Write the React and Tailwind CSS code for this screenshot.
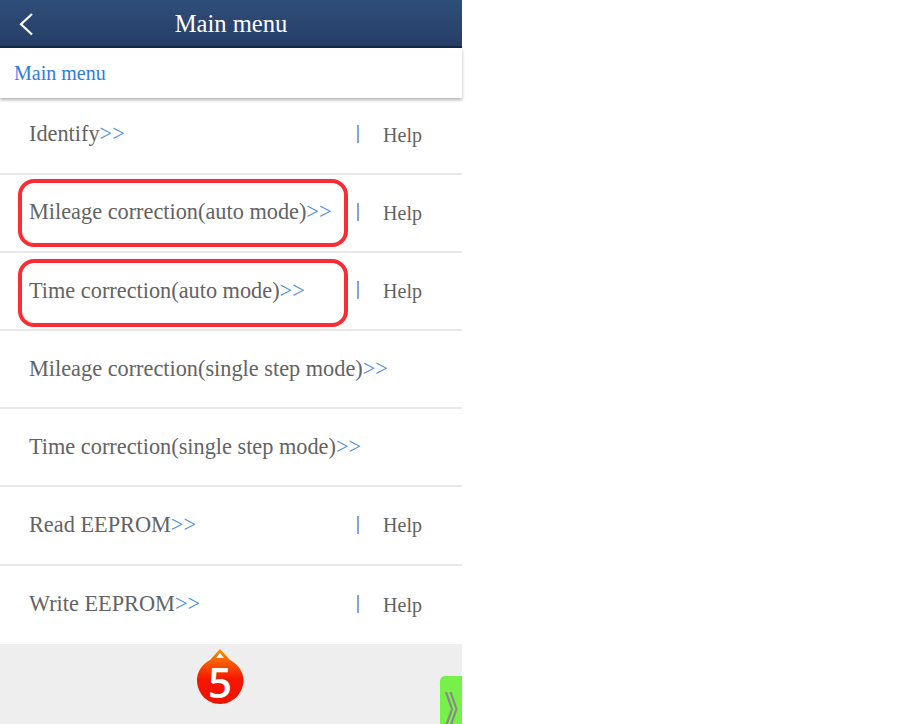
const rows = [
  { label: "Identify", help: true },
  { label: "Mileage correction(auto mode)", help: true, box: "top-[4.7px]" },
  { label: "Time correction(auto mode)", help: true, box: "top-[6.7px]" },
  { label: "Mileage correction(single step mode)" },
  { label: "Time correction(single step mode)" },
  { label: "Read EEPROM", help: true },
  { label: "Write EEPROM", help: true },
];

function MenuRow({ label, help, box }) {
  return (
    <div className="relative flex h-[78.2px] items-center border-b-2 border-[#e8e8e8] pl-[29px] text-[22.3px] text-[#636363] last:border-b-0">
      <div className="flex-1 pb-[1px]">
        {label}
        <span className="text-[#4a8fe0]">&gt;&gt;</span>
      </div>
      {help && (
        <div className="flex items-center">
          <div className="mb-[1px] h-[18px] w-[2px] bg-[#7aa8e4]" />
          <div className="ml-[24px] mr-[40px] text-[20px]">Help</div>
        </div>
      )}
      {box && (
        <div className={`absolute left-[17.5px] h-[67.4px] w-[330px] rounded-[16px] border-[4px] border-[#fb2c33] ${box}`} />
      )}
    </div>
  );
}

export default function App() {
  return (
    <div className="relative h-[724px] w-[913px] overflow-hidden bg-white font-['Liberation_Serif',serif]">
      <div className="flex h-[724px] w-[462px] flex-col">
        <div className="relative flex h-[48px] items-center justify-center border-b-2 border-[#14294a] bg-gradient-to-b from-[#2f4e7a] to-[#253e66] text-[24.6px] text-white">
          <svg className="absolute left-[18px] top-[12px]" width="18" height="24" viewBox="0 0 18 24" fill="none">
            <path d="M14 2 L3 12.2 L14 22.5" stroke="#fff" strokeWidth="2.2" />
          </svg>
          <span className="pt-[2px]">Main menu</span>
        </div>
        <div className="relative z-10 flex h-[50px] items-center bg-white pl-[14px] text-[20px] text-[#2f7be0] shadow-[0_2px_3px_rgba(0,0,0,0.3)]">
          Main menu
        </div>
        <div className="-mt-[1.6px]">
          {rows.map((row) => (
            <MenuRow key={row.label} {...row} />
          ))}
        </div>
        <div className="relative flex-1 bg-[#eeeeee]">
          <div className="absolute left-[196px] top-[5px] h-[56px] w-[48px]">
            <svg className="absolute left-0 top-0" width="48" height="56" viewBox="0 0 48 56">
              <defs>
                <linearGradient id="drop" x1="0" y1="0" x2="0" y2="1">
                  <stop offset="0" stopColor="#f59300" />
                  <stop offset="0.55" stopColor="#f71500" />
                  <stop offset="1" stopColor="#e81500" />
                </linearGradient>
              </defs>
              <path d="M24 0 L34 11 C42 15 47.5 23 47.5 31 C47.5 44 37 55 24 55 C11 55 1 44 1 31 C1 23 6 15 14 11 Z" fill="url(#drop)" />
              <path d="M24 4 L28 9 H20 Z" fill="#fff" />
            </svg>
            <div className="absolute left-0 top-[5px] w-[48px] text-center font-['Open_Sans',sans-serif] text-[42px] font-semibold leading-[56px] text-white">
              5
            </div>
          </div>
          <div className="absolute bottom-0 left-[440px] h-[48px] w-[22px] overflow-hidden rounded-tl-[5px] bg-[#78f04a]">
            <svg className="absolute left-0 top-[16px]" width="22" height="32" viewBox="0 0 22 32" fill="none">
              <path d="M6 0 L12 17 L6 34 M10.5 0 L16.5 17 L10.5 34" stroke="#8a8a8a" strokeWidth="2.2" />
            </svg>
          </div>
        </div>
      </div>
    </div>
  );
}
